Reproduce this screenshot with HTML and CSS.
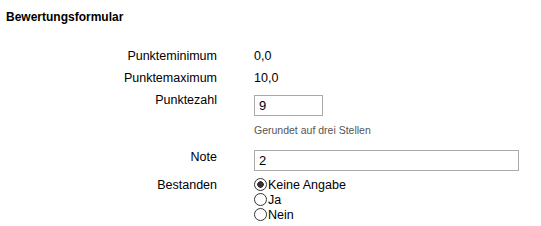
FILE: index.html
```html
<!DOCTYPE html>
<html lang="de">
<head>
    <meta charset="UTF-8">
    <title>Bewertungsformular</title>
    <link rel="stylesheet" href="styles.css">
</head>
<body>
    <h2 class="form-title">Bewertungsformular</h2>

    <form class="rating-form">
        <div class="row">
            <label class="row-label">Punkteminimum</label>
            <div class="row-value">0,0</div>
        </div>
        <div class="row">
            <label class="row-label">Punktemaximum</label>
            <div class="row-value">10,0</div>
        </div>
        <div class="row">
            <label class="row-label" for="punkte">Punktezahl</label>
            <div class="row-value">
                <input class="text-input short" id="punkte" type="text" value="9">
                <div class="hint">Gerundet auf drei Stellen</div>
            </div>
        </div>
        <div class="row row-note">
            <label class="row-label" for="note">Note</label>
            <div class="row-value">
                <input class="text-input wide" id="note" type="text" value="2">
            </div>
        </div>
        <div class="row row-radios">
            <label class="row-label">Bestanden</label>
            <div class="row-value radio-list">
                <label class="radio"><input type="radio" name="bestanden" checked>Keine Angabe</label>
                <label class="radio"><input type="radio" name="bestanden">Ja</label>
                <label class="radio"><input type="radio" name="bestanden">Nein</label>
            </div>
        </div>
    </form>
</body>
</html>
```

FILE: styles.css
```css
body {
    font-family: 'Liberation Sans', Arial, sans-serif;
    font-size: 12.5px;
    line-height: 16px;
    color: #000;
    background-color: #fff;
    margin: 0;
    padding: 0 6px;
}

.form-title {
    font-size: 12px;
    font-weight: bold;
    line-height: 16px;
    margin: 9px 0 0 0;
}

.rating-form {
    margin-top: 23px;
}

.row {
    display: grid;
    grid-template-columns: 211px 1fr;
    column-gap: 37px;
    margin-bottom: 6px;
}

.row-label {
    text-align: right;
}

.text-input {
    display: block;
    box-sizing: border-box;
    height: 21px;
    margin: 3px 0 0 0;
    padding: 0 4px;
    border: 1px solid #aaa;
    font-family: 'Liberation Sans', Arial, sans-serif;
    font-size: 13px;
    color: #000;
    outline: none;
}

.text-input.short {
    width: 69px;
}

.text-input.wide {
    width: 265px;
    margin-top: 1px;
}

.hint {
    margin-top: 7px;
    font-size: 10.5px;
    line-height: 14px;
    color: #555;
}

.row-note {
    margin-top: 12px;
}

.row-radios {
    margin-top: 1px;
}

.radio-list {
    display: flex;
    flex-direction: column;
}

.radio {
    display: flex;
    align-items: center;
    height: 15px;
}

.radio input {
    appearance: none;
    -webkit-appearance: none;
    box-sizing: border-box;
    width: 13px;
    height: 13px;
    margin: 0 1px 0 0;
    border: 1px solid #333;
    border-radius: 50%;
    background-color: #fff;
}

.radio input:checked {
    background: radial-gradient(circle, #333 0, #333 3px, #fff 3.6px);
}
```
